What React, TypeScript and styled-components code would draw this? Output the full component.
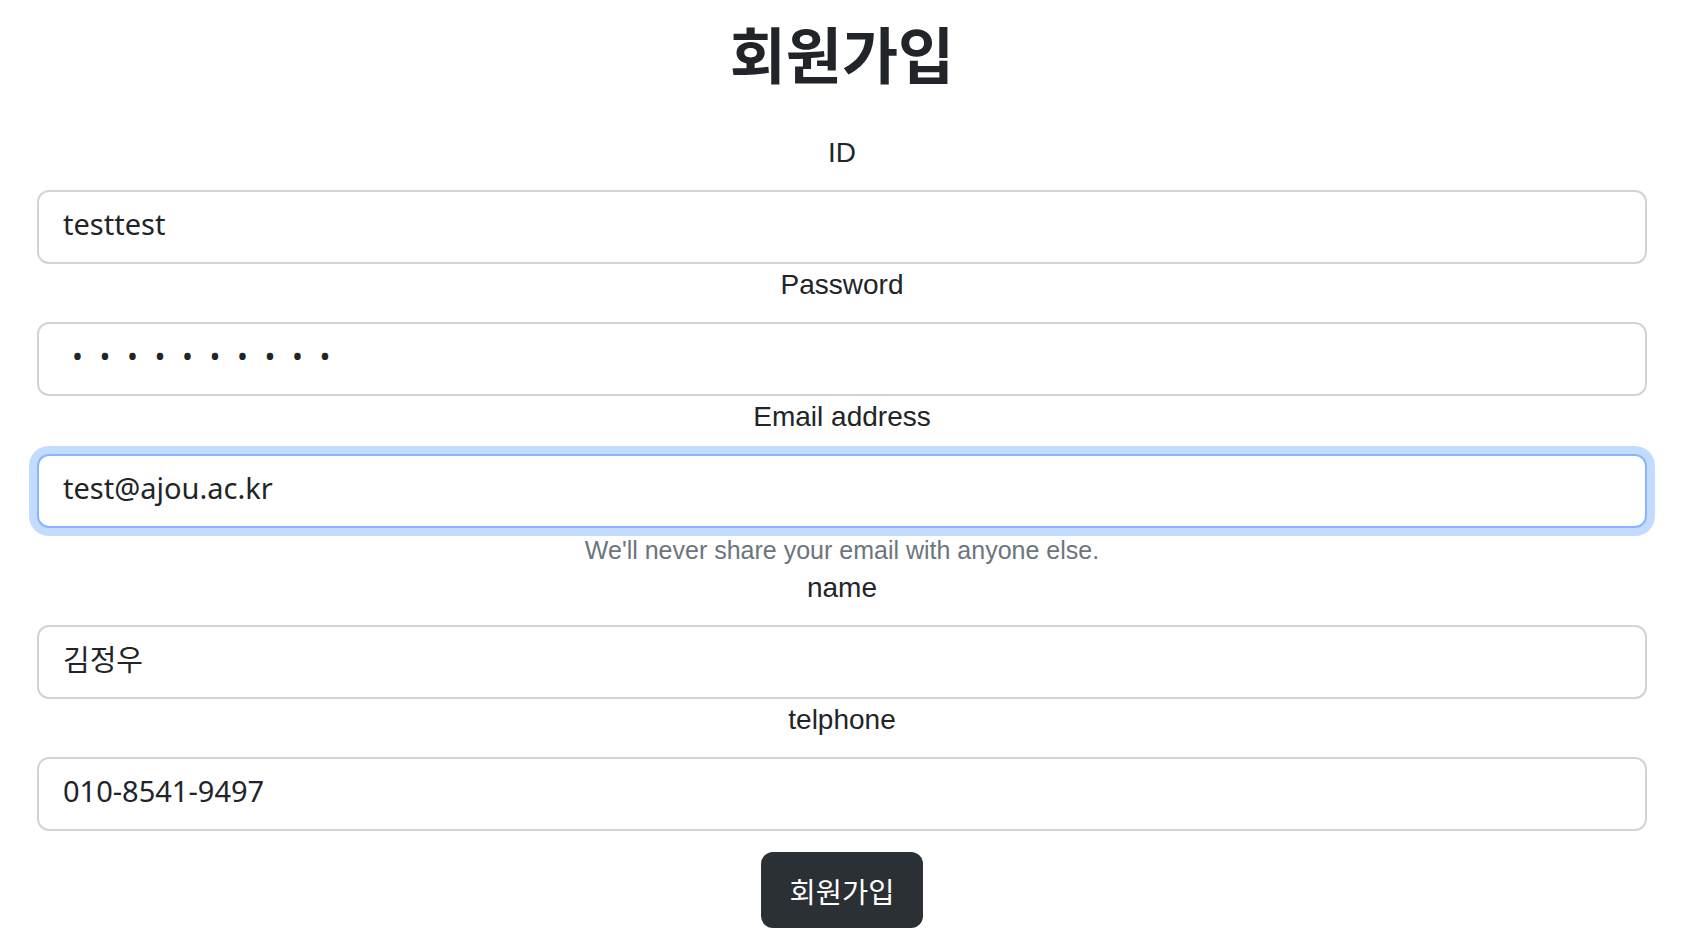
import React from "react";
import styled, { createGlobalStyle } from "styled-components";

const GlobalStyle = createGlobalStyle`
    html, body {
        margin: 0;
        padding: 0;
        background: #ffffff;
    }
    * {
        box-sizing: border-box;
    }
`;

interface Field {
    label: string;
    type: string;
    value: string;
    help?: string;
    focused?: boolean;
}

// 회원가입 폼 항목
const fields: Field[] = [
    { label: "ID", type: "text", value: "testtest" },
    { label: "Password", type: "password", value: "testtest12" },
    {
        label: "Email address",
        type: "email",
        value: "test@ajou.ac.kr",
        help: "We'll never share your email with anyone else.",
        focused: true,
    },
    { label: "name", type: "text", value: "김정우" },
    { label: "telphone", type: "tel", value: "010-8541-9497" },
];

export default function App() {
    return (
        <>
            <GlobalStyle />
            <StyledPage>
                <StyledTitle>회원가입</StyledTitle>
                <StyledForm onSubmit={(e) => e.preventDefault()}>
                    {fields.map((field) => (
                        <StyledGroup key={field.label}>
                            <StyledLabel>{field.label}</StyledLabel>
                            <StyledInput
                                type={field.type}
                                defaultValue={field.value}
                                $focused={field.focused}
                                $secret={field.type === "password"}
                            />
                            {field.help ? <StyledHelp>{field.help}</StyledHelp> : null}
                        </StyledGroup>
                    ))}
                    <StyledButton type="submit">회원가입</StyledButton>
                </StyledForm>
            </StyledPage>
        </>
    );
}

const StyledPage = styled.div`
    display: flex;
    flex-direction: column;
    align-items: stretch;
    padding: 0 45px 0 37px;
    color: #212529;
`;

const StyledTitle = styled.h1`
    margin: 19px 0 46px;
    font-family: "Noto Sans CJK KR", sans-serif;
    font-size: 61px;
    font-weight: 700;
    line-height: 67px;
    text-align: center;
    color: #212529;
`;

const StyledForm = styled.form`
    display: flex;
    flex-direction: column;
    align-items: stretch;
`;

const StyledGroup = styled.div`
    display: flex;
    flex-direction: column;
`;

const StyledLabel = styled.label`
    margin-bottom: 16px;
    font-family: "Liberation Sans", Arial, sans-serif;
    font-size: 28px;
    line-height: 42px;
    text-align: center;
    color: #212529;
`;

const StyledInput = styled.input<{ $focused?: boolean; $secret?: boolean }>`
    display: block;
    width: 100%;
    height: 74px;
    padding: 0 24px 8px;
    font-family: "Noto Sans", "Noto Sans CJK KR", sans-serif;
    font-size: 29px;
    color: #212529;
    background: #ffffff;
    border: 2px solid ${(p) => (p.$focused ? "#86b7fe" : "#ced4da")};
    border-radius: 12px;
    outline: none;
    box-shadow: ${(p) => (p.$focused ? "0 0 0 8px rgba(13, 110, 253, 0.25)" : "none")};
    letter-spacing: ${(p) => (p.$secret ? "16.6px" : "normal")};
    text-indent: ${(p) => (p.$secret ? "9px" : "0")};
`;

const StyledHelp = styled.div`
    margin-top: 6px;
    font-family: "Liberation Sans", Arial, sans-serif;
    font-size: 25px;
    line-height: 33px;
    text-align: center;
    color: #6c757d;
`;

const StyledButton = styled.button`
    align-self: center;
    margin-top: 21px;
    width: 162px;
    height: 76px;
    padding: 0;
    font-family: "Noto Sans CJK KR", sans-serif;
    font-size: 28.5px;
    color: #ffffff;
    background: #2b3035;
    border: none;
    border-radius: 12px;
    cursor: pointer;
`;
